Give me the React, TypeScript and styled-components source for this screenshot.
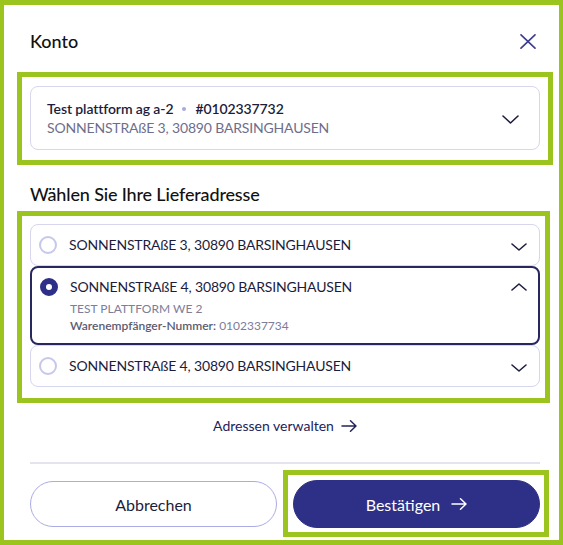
import React, { useState } from 'react';
import styled, { createGlobalStyle } from 'styled-components';

const GlobalStyle = createGlobalStyle`
  * {
    box-sizing: border-box;
  }
  body {
    margin: 0;
    font-family: 'Lato', 'Noto Sans', sans-serif;
    background: #ffffff;
  }
`;

const GREEN = '#9bc41e';
const NAVY = '#2e3087';
const INK = '#1c1c3c';

const Frame = styled.div`
  width: 563px;
  height: 545px;
  border: solid ${GREEN};
  border-width: 5px 4px 5px 4px;
  padding: 23px 19px 0 26px;
  display: flex;
  flex-direction: column;
  background: #fff;
`;

const Header = styled.div`
  height: 26px;
  display: flex;
  align-items: center;
  justify-content: space-between;
`;

const Title = styled.h2`
  margin: 0;
  font-size: 18px;
  font-weight: 500;
  line-height: 24px;
  color: #111;
`;

const IconButton = styled.button`
  border: 0;
  background: none;
  padding: 0;
  margin-right: 4px;
  display: flex;
  color: #3b3b8f;
  cursor: pointer;
`;

// green focus frame drawn around a block, pushed outward with negative margins
const Highlight = styled.div<{ $m: string; $p: string }>`
  border: 5px solid ${GREEN};
  margin: ${(p) => p.$m};
  padding: ${(p) => p.$p};
`;

const AccountCard = styled.button`
  width: 100%;
  height: 64px;
  border: 1px solid #d6d6ef;
  border-radius: 8px;
  background: #fff;
  padding: 12px 20px 12px 16px;
  display: flex;
  align-items: center;
  justify-content: space-between;
  text-align: left;
  font-family: inherit;
  cursor: pointer;
`;

const AccountText = styled.div`
  display: flex;
  flex-direction: column;
`;

const AccountName = styled.div`
  font-size: 14px;
  line-height: 19px;
  font-weight: 600;
  letter-spacing: -0.1px;
  color: ${INK};
  display: flex;
  align-items: center;
`;

const Dot = styled.span`
  width: 4px;
  height: 4px;
  border-radius: 50%;
  background: #a9a9dd;
  margin: 0 9px;
`;

const Muted = styled.div`
  font-size: 14px;
  line-height: 19px;
  letter-spacing: -0.17px;
  color: #6e6e8c;
`;

const SectionTitle = styled.h3`
  margin: 17px 0 5px;
  font-size: 18px;
  font-weight: 500;
  line-height: 24px;
  letter-spacing: -0.15px;
  color: #111;
`;

const List = styled.div`
  display: flex;
  flex-direction: column;
`;

const Option = styled.div<{ $active: boolean }>`
  border: ${(p) => (p.$active ? `2px solid #27285e` : `1px solid #d6d6ef`)};
  border-radius: 8px;
  padding: ${(p) => (p.$active ? '9px 11px 9px 8px' : '10px 12px 10px 8px')};
  background: #fff;
  cursor: pointer;
`;

const OptionRow = styled.div`
  height: 20px;
  display: flex;
  align-items: center;
  gap: 12px;
`;

const Radio = styled.span<{ $checked: boolean }>`
  flex: none;
  width: 18px;
  height: 18px;
  border-radius: 50%;
  border: ${(p) => (p.$checked ? `6px solid ${NAVY}` : '2px solid #c7c7ec')};
  background: #fff;
`;

const Address = styled.span`
  flex: 1;
  font-size: 14px;
  line-height: 20px;
  letter-spacing: -0.17px;
  color: ${INK};
`;

const Chevron = styled.svg<{ $nudge?: number }>`
  flex: none;
  color: #1e1e40;
  margin-top: ${(p) => p.$nudge || 0}px;
`;

const Details = styled.div`
  margin: 3px 0 0 30px;
  font-size: 12px;
  line-height: 17px;
  color: #7d7d98;
`;

const Label = styled.span`
  font-weight: 600;
  color: #5c5c70;
`;

const ManageLink = styled.a`
  align-self: center;
  margin-top: 13px;
  display: flex;
  align-items: center;
  gap: 7px;
  font-size: 14px;
  line-height: 20px;
  color: #23235a;
  text-decoration: none;
  cursor: pointer;
`;

const Divider = styled.hr`
  margin: 26px 0 0;
  border: 0;
  height: 2px;
  background: #e4e4ee;
`;

const Footer = styled.div`
  margin-top: 16px;
  display: grid;
  grid-template-columns: 1fr 1fr;
  gap: 16px;
  align-items: center;
`;

const PillButton = styled.button<{ $primary?: boolean }>`
  width: 100%;
  height: ${(p) => (p.$primary ? 48 : 46)}px;
  border-radius: 24px;
  border: 1px solid ${(p) => (p.$primary ? NAVY : '#ababe6')};
  background: ${(p) => (p.$primary ? NAVY : '#fff')};
  color: ${(p) => (p.$primary ? '#fff' : INK)};
  font-family: inherit;
  font-size: 16px;
  font-weight: 400;
  display: flex;
  align-items: center;
  justify-content: center;
  gap: 11px;
  cursor: pointer;
`;

const ChevronDown = ({ w = 16, h = 8, nudge = 0 }: { w?: number; h?: number; nudge?: number }) => (
  <Chevron width={w} height={h} viewBox={`0 0 ${w} ${h}`} fill="none" $nudge={nudge}>
    <path d={`M1 1 L${w / 2} ${h - 1} L${w - 1} 1`} stroke="currentColor" strokeWidth="1.6" strokeLinecap="round" strokeLinejoin="round" />
  </Chevron>
);

const ChevronUp = () => (
  <Chevron width={16} height={8} viewBox="0 0 16 8" fill="none">
    <path d="M1 7 L8 1 L15 7" stroke="currentColor" strokeWidth="1.6" strokeLinecap="round" strokeLinejoin="round" />
  </Chevron>
);

const Arrow = ({ color = 'currentColor' }: { color?: string }) => (
  <svg width="16" height="12" viewBox="0 0 16 12" fill="none">
    <path d="M1 6 H15 M9.5 0.8 L15 6 L9.5 11.2" stroke={color} strokeWidth="1.5" strokeLinecap="round" strokeLinejoin="round" />
  </svg>
);

const addresses = [
  { id: 1, street: 'SONNENSTRAßE 3, 30890 BARSINGHAUSEN', name: 'TEST PLATTFORM WE 1', number: '0102337733' },
  { id: 2, street: 'SONNENSTRAßE 4, 30890 BARSINGHAUSEN', name: 'TEST PLATTFORM WE 2', number: '0102337734' },
  { id: 3, street: 'SONNENSTRAßE 4, 30890 BARSINGHAUSEN', name: 'TEST PLATTFORM WE 3', number: '0102337735' },
];

export default function App() {
  const [selected, setSelected] = useState(2);

  return (
    <>
      <GlobalStyle />
      <Frame>
        <Header>
          <Title>Konto</Title>
          <IconButton aria-label="Schließen">
            <svg width="16" height="15" viewBox="0 0 16 15" fill="none">
              <path d="M1 0.8 L15 14.2 M15 0.8 L1 14.2" stroke="currentColor" strokeWidth="1.6" strokeLinecap="round" />
            </svg>
          </IconButton>
        </Header>

        <Highlight $m="18px -13px 0" $p="9px 8px 10px">
          <AccountCard>
            <AccountText>
              <AccountName>
                Test plattform ag a-2
                <Dot />
                #0102337732
              </AccountName>
              <Muted>SONNENSTRAßE 3, 30890 BARSINGHAUSEN</Muted>
            </AccountText>
            <ChevronDown w={17} h={9} nudge={2} />
          </AccountCard>
        </Highlight>

        <SectionTitle>Wählen Sie Ihre Lieferadresse</SectionTitle>

        <Highlight $m="0 -10px 0 -13px" $p="8px 5px 11px 8px">
          <List>
            {addresses.map((a) => {
              const active = a.id === selected;
              return (
                <Option key={a.id} $active={active} onClick={() => setSelected(a.id)}>
                  <OptionRow>
                    <Radio $checked={active} />
                    <Address>{a.street}</Address>
                    {active ? <ChevronUp /> : <ChevronDown nudge={4} />}
                  </OptionRow>
                  {active && (
                    <Details>
                      <div>{a.name}</div>
                      <div>
                        <Label>Warenempfänger-Nummer:</Label> {a.number}
                      </div>
                    </Details>
                  )}
                </Option>
              );
            })}
          </List>
        </Highlight>

        <ManageLink>
          Adressen verwalten
          <Arrow />
        </ManageLink>

        <Divider />

        <Footer>
          <PillButton>Abbrechen</PillButton>
          <Highlight $m="-10px -9px -9px -10px" $p="5px 4px 4px 5px">
            <PillButton $primary>
              Bestätigen
              <Arrow color="#fff" />
            </PillButton>
          </Highlight>
        </Footer>
      </Frame>
    </>
  );
}
